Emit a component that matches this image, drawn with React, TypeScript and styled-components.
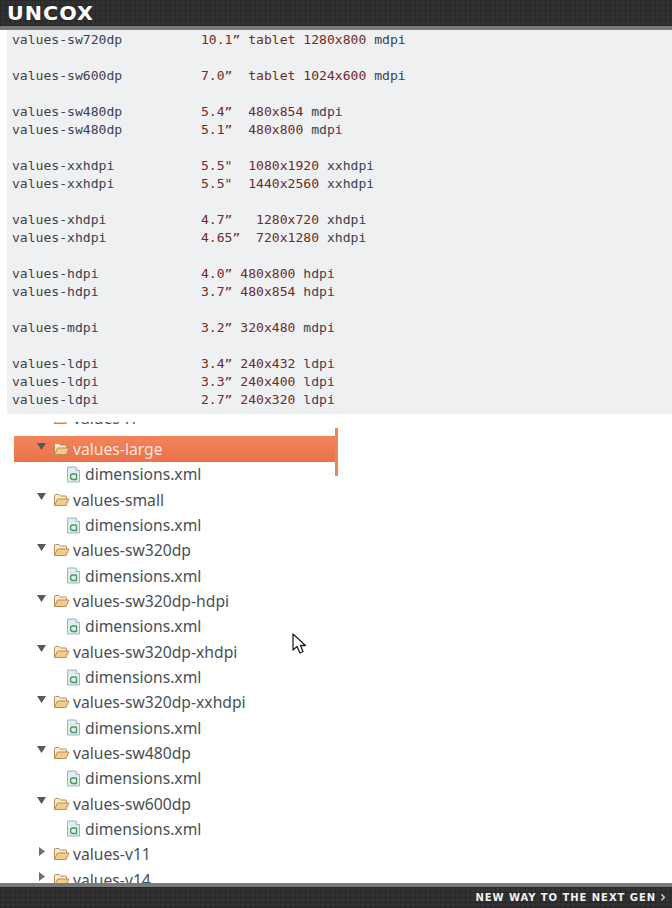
import { createGlobalStyle, styled } from "styled-components";

const GlobalStyle = createGlobalStyle`
  html, body {
    margin: 0;
    padding: 0;
    background: #fff;
  }
`;

const Page = styled.div`
  width: 672px;
  height: 908px;
  display: flex;
  flex-direction: column;
  overflow: hidden;
`;

const gridBackground = `
  background-color: #323232;
  background-image:
    linear-gradient(#282828 1px, transparent 1px),
    linear-gradient(90deg, #282828 1px, transparent 1px);
  background-size: 5px 5px;
`;

const Header = styled.header`
  ${gridBackground}
  height: 26px;
  flex: none;
  display: flex;
  align-items: center;
  padding-left: 7px;
  border-bottom: 4px solid #7a7a7a;
`;

const Logo = styled.div`
  font-family: "DejaVu Sans", sans-serif;
  font-weight: 700;
  font-size: 20px;
  line-height: 20px;
  letter-spacing: 1px;
  color: #fff;
  transform: scaleX(1.03);
  transform-origin: left center;
`;

const Code = styled.pre`
  margin: 0 0 0 7px;
  padding: 1px 0 5px 5px;
  height: 378px;
  flex: none;
  background: #eff0f2;
  font-family: "DejaVu Sans Mono", monospace;
  font-size: 13.08px;
  line-height: 18px;
  color: #3a4350;
`;

const Num = styled.span`
  color: #6f2b2b;
`;

const Tree = styled.div`
  position: relative;
  flex: 1;
  min-height: 0;
  overflow: hidden;
  padding: 8.4px 0 0 14px;
`;

const ClippedRow = styled.div`
  height: 8px;
  margin-bottom: 6px;
  overflow: hidden;
  display: flex;
  align-items: flex-end;
`;

const Row = styled.div<{ $selected?: boolean; $child?: boolean }>`
  height: 25.33px;
  width: 324px;
  display: flex;
  align-items: center;
  flex: none;
  padding-left: ${({ $child }) => ($child ? "52px" : "23px")};
  box-sizing: border-box;
  font-family: "Noto Sans", sans-serif;
  font-size: 15.7px;
  color: ${({ $selected }) => ($selected ? "#fde8df" : "#4a4f57")};
  background: ${({ $selected }) =>
    $selected ? "linear-gradient(#f3845c, #ec7148)" : "transparent"};
`;

const Arrow = styled.svg`
  width: 10px;
  height: 10px;
  flex: none;
  margin-right: 6px;
  margin-top: -5px;
`;

const FolderIcon = styled.svg`
  width: 17px;
  height: 14px;
  flex: none;
  margin-right: 3px;
`;

const FileIcon = styled.svg`
  width: 15px;
  height: 17px;
  flex: none;
  margin-right: 4px;
`;

const SideStrip = styled.div`
  position: absolute;
  left: 335px;
  top: 14px;
  width: 3px;
  height: 48px;
  background: #f0825c;
`;

const Cursor = styled.svg`
  position: absolute;
  left: 291px;
  top: 218px;
  width: 16px;
  height: 24px;
`;

const Footer = styled.footer`
  ${gridBackground}
  height: 21px;
  flex: none;
  border-top: 4px solid #7a7a7a;
  display: flex;
  align-items: center;
  justify-content: flex-end;
  padding-right: 6px;
`;

const Tagline = styled.div`
  font-family: "DejaVu Sans", sans-serif;
  font-size: 10px;
  font-weight: 700;
  letter-spacing: 0.95px;
  color: #f0f0f0;
  display: flex;
  align-items: center;
  gap: 4px;
`;

const Chevron = styled.span`
  font-size: 15px;
  font-weight: 400;
  line-height: 10px;
  letter-spacing: 0;
  margin-top: -2px;
`;

const Triangle = ({ open }: { open: boolean }) => (
  <Arrow viewBox="0 0 10 10">
    {open ? (
      <polygon points="0,1 9,1 4.5,8" fill="#55585c" />
    ) : (
      <polygon points="2,0 8,4.5 2,9" fill="#6b6e72" />
    )}
  </Arrow>
);

const Folder = () => (
  <FolderIcon viewBox="0 0 17 14">
    <path d="M1.5 12.5V2.5Q1.5 1.5 2.5 1.5H6L7.5 3H12.5Q13.5 3 13.5 4V6" fill="#f8ead0" stroke="#b58f57" />
    <path d="M1.5 12.5L4.5 6H16L13 12.5Z" fill="#f4cb88" stroke="#b58f57" strokeLinejoin="round" />
  </FolderIcon>
);

const XmlFile = () => (
  <FileIcon viewBox="0 0 15 17">
    <path d="M1.5 1H10L13.5 4.5V16H1.5Z" fill="#dfecf2" stroke="#9fb4c0" />
    <path d="M10 1V4.5H13.5" fill="#fff" stroke="#9fb4c0" />
    <path d="M10.5 8H7Q4.5 8 4.5 10.75T7 13.5H10.5V8" fill="none" stroke="#4d9a55" strokeWidth="1.3" />
  </FileIcon>
);

const codeLines: [string, string, string, string][] = [
  ["values-sw720dp", "10.1”", " tablet 1280x800", " mdpi"],
  ["", "", "", ""],
  ["values-sw600dp", "7.0”", "  tablet 1024x600", " mdpi"],
  ["", "", "", ""],
  ["values-sw480dp", "5.4”", "  480x854", " mdpi"],
  ["values-sw480dp", "5.1”", "  480x800", " mdpi"],
  ["", "", "", ""],
  ["values-xxhdpi", "5.5\"", "  1080x1920", " xxhdpi"],
  ["values-xxhdpi", "5.5\"", "  1440x2560", " xxhdpi"],
  ["", "", "", ""],
  ["values-xhdpi", "4.7”", "   1280x720", " xhdpi"],
  ["values-xhdpi", "4.65”", "  720x1280", " xhdpi"],
  ["", "", "", ""],
  ["values-hdpi", "4.0”", " 480x800", " hdpi"],
  ["values-hdpi", "3.7”", " 480x854", " hdpi"],
  ["", "", "", ""],
  ["values-mdpi", "3.2”", " 320x480", " mdpi"],
  ["", "", "", ""],
  ["values-ldpi", "3.4”", " 240x432", " ldpi"],
  ["values-ldpi", "3.3”", " 240x400", " ldpi"],
  ["values-ldpi", "2.7”", " 240x320", " ldpi"],
];

const folders = [
  "values-small",
  "values-sw320dp",
  "values-sw320dp-hdpi",
  "values-sw320dp-xhdpi",
  "values-sw320dp-xxhdpi",
  "values-sw480dp",
  "values-sw600dp",
];

export default function App() {
  return (
    <Page>
      <GlobalStyle />
      <Header>
        <Logo>UNCOX</Logo>
      </Header>
      <Code>
        {codeLines.map(([name, size, res, dpi], i) => (
          <div key={i}>
            {name ? (
              <>
                {name.padEnd(24, " ")}
                <Num>
                  {size}
                  {res}
                </Num>
                {dpi}
              </>
            ) : (
              " "
            )}
          </div>
        ))}
      </Code>
      <Tree>
        <ClippedRow>
          <Row>
            <Triangle open />
            <Folder />
            values-l1
          </Row>
        </ClippedRow>
        <Row $selected>
          <Triangle open />
          <Folder />
          values-large
        </Row>
        <Row $child>
          <XmlFile />
          dimensions.xml
        </Row>
        {folders.map((f) => (
          <div key={f}>
            <Row>
              <Triangle open />
              <Folder />
              {f}
            </Row>
            <Row $child>
              <XmlFile />
              dimensions.xml
            </Row>
          </div>
        ))}
        <Row>
          <Triangle open={false} />
          <Folder />
          values-v11
        </Row>
        <Row>
          <Triangle open={false} />
          <Folder />
          values-v14
        </Row>
        <SideStrip />
        <Cursor viewBox="0 0 16 24">
          <path
            d="M2 2V18L6 14.5L9 21L12 19.5L9.5 13.5H14.5Z"
            fill="#fff"
            stroke="#222"
            strokeWidth="1.3"
            strokeLinejoin="round"
          />
        </Cursor>
      </Tree>
      <Footer>
        <Tagline>
          NEW WAY TO THE NEXT GEN <Chevron>›</Chevron>
        </Tagline>
      </Footer>
    </Page>
  );
}
